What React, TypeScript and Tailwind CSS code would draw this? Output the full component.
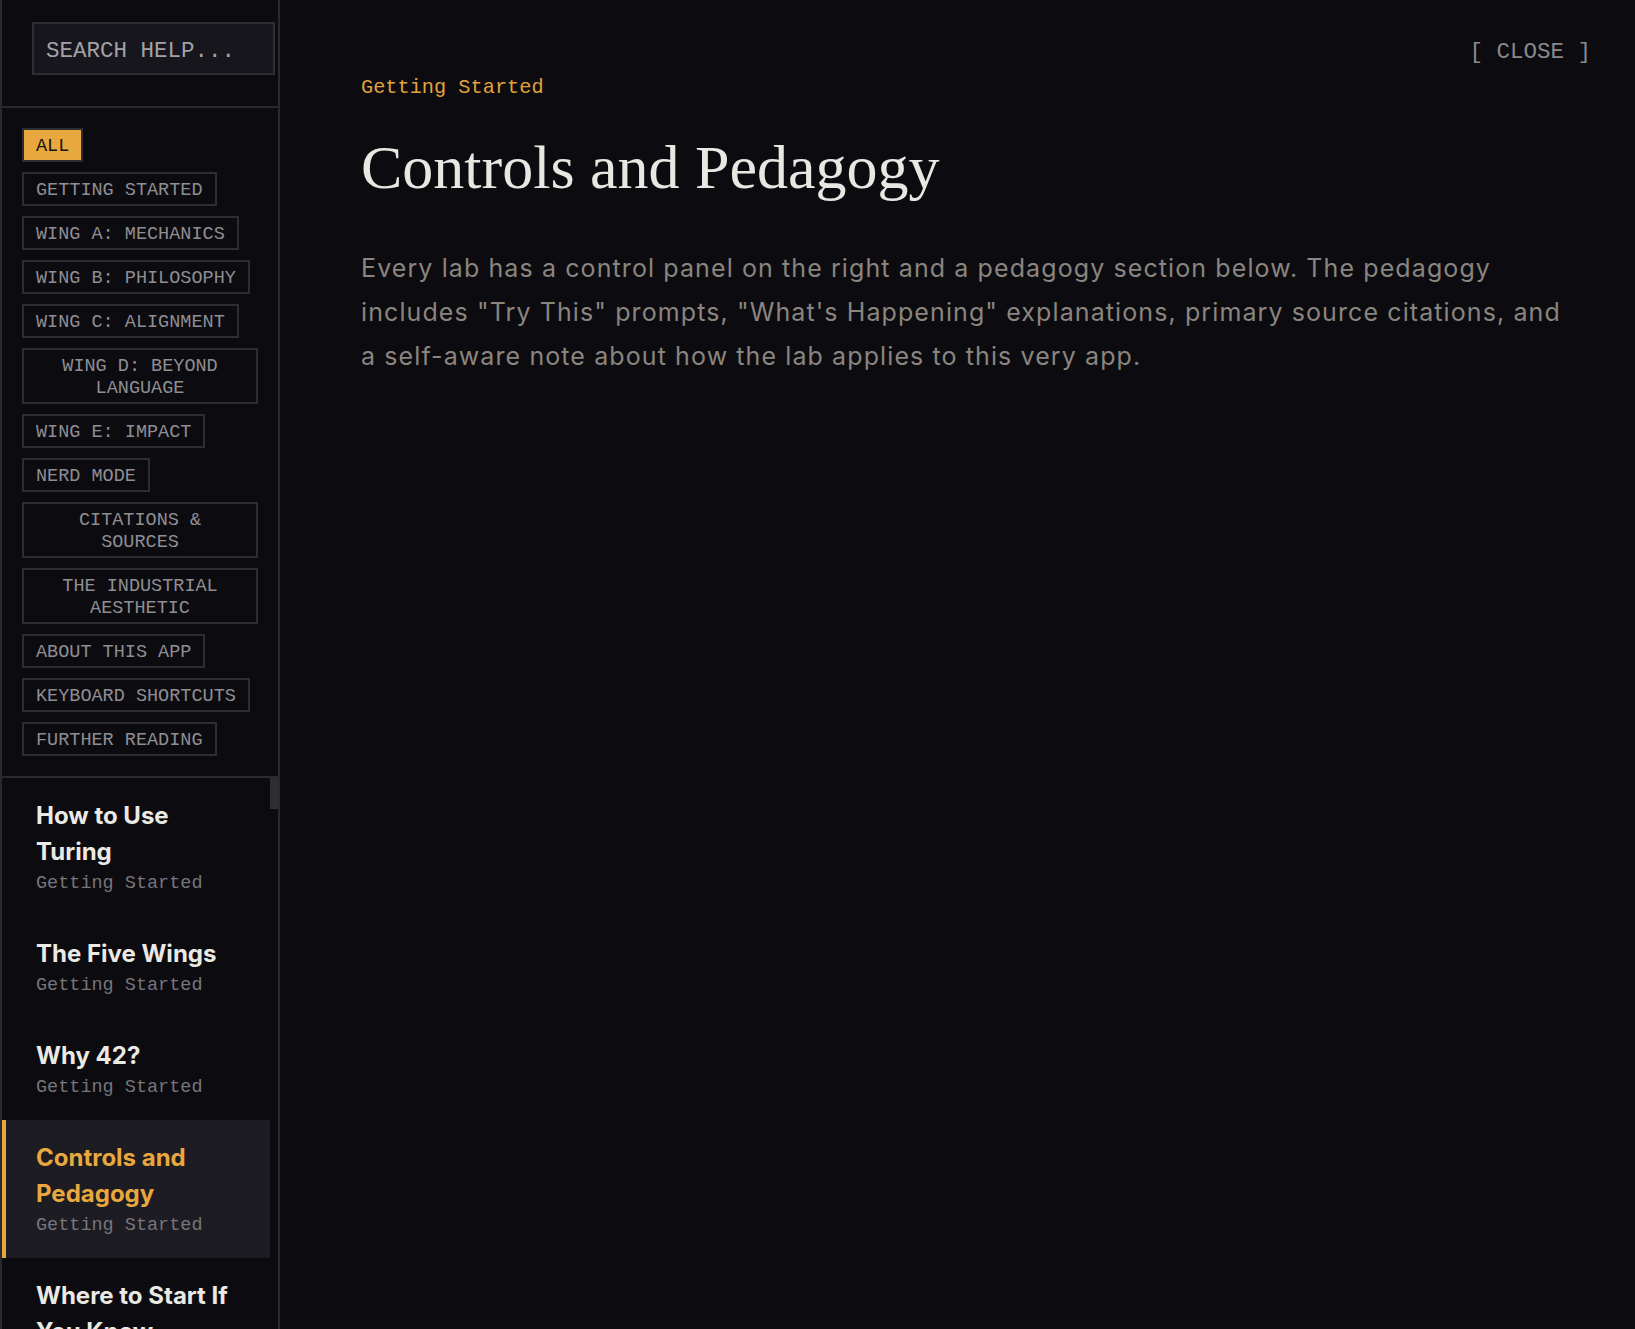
import { useState } from "react";

const mono = "font-['Liberation_Mono','DejaVu_Sans_Mono',monospace]";
const sans = "font-['Inter','Noto_Sans',sans-serif]";

const filters = [
  "ALL",
  "GETTING STARTED",
  "WING A: MECHANICS",
  "WING B: PHILOSOPHY",
  "WING C: ALIGNMENT",
  "WING D: BEYOND LANGUAGE",
  "WING E: IMPACT",
  "NERD MODE",
  "CITATIONS & SOURCES",
  "THE INDUSTRIAL AESTHETIC",
  "ABOUT THIS APP",
  "KEYBOARD SHORTCUTS",
  "FURTHER READING",
];

const articles = [
  { title: "How to Use Turing", section: "Getting Started" },
  { title: "The Five Wings", section: "Getting Started" },
  { title: "Why 42?", section: "Getting Started" },
  { title: "Controls and Pedagogy", section: "Getting Started" },
  { title: "Where to Start If You Know Nothing", section: "Getting Started" },
];

const Sidebar = ({ active, onPick }: { active: number; onPick: (i: number) => void }) => {
  const [filter, setFilter] = useState("ALL");

  return (
    <aside className="w-[280px] shrink-0 h-full flex flex-col border-l-2 border-r-2 border-[#2a2930] bg-[#0c0b10] overflow-hidden">
      <div className="pt-[22px] pb-[31px] pl-[30px] pr-[3px] border-b-2 border-[#2a2930]">
        <input
          placeholder="SEARCH HELP..."
          className={`${mono} w-full h-[53px] bg-[#17161c] border-2 border-[#2e2d33] px-[12px] pt-[5px] text-[22.5px] text-[#a3a2a7] placeholder:text-[#a3a2a7] outline-none`}
        />
      </div>

      <div className="px-[20px] py-[20px] border-b-2 border-[#2a2930] flex flex-col items-start gap-[10px]">
        {filters.map((f) => {
          const on = f === filter;
          return (
            <button
              key={f}
              onClick={() => setFilter(f)}
              className={`${mono} border-2 border-[#2e2d33] px-[12px] pt-[5.5px] pb-[2.5px] text-[18.5px] leading-[22px] text-center ${
                on ? "bg-[#e8a83e] text-[#16130e]" : "text-[#8f8e93]"
              }`}
            >
              {f}
            </button>
          );
        })}
      </div>

      <div className="flex-1 flex min-h-0">
        <div className="flex-1 flex flex-col">
          {articles.map((a, i) => {
            const on = i === active;
            return (
              <button
                key={a.title}
                onClick={() => onPick(i)}
                className={`text-left border-l-4 pl-[30px] pr-[30px] py-[19.5px] ${
                  on ? "border-[#e8a83e] bg-[#1d1c22]" : "border-transparent"
                }`}
              >
                <div
                  className={`${sans} text-[24px] leading-[36px] font-bold ${
                    on ? "text-[#e8a83e]" : "text-[#ebe9e4]"
                  }`}
                >
                  {a.title}
                </div>
                <div className={`${mono} text-[18.5px] leading-[27px] text-[#77757b]`}>{a.section}</div>
              </button>
            );
          })}
        </div>
        <div className="w-[8px] shrink-0">
          <div className="h-[31px] bg-[#2e2d33]" />
        </div>
      </div>
    </aside>
  );
};

export default function App() {
  const [active, setActive] = useState(3);
  const article = articles[active];

  return (
    <div className="h-screen w-full flex bg-[#0c0b10] overflow-hidden">
      <Sidebar active={active} onPick={setActive} />

      <main className="flex-1 min-w-0 pt-[38px] pr-[44px]">
        <div className="flex justify-end">
          <button className={`${mono} text-[22.5px] leading-[28px] text-[#8a898e]`}>[ CLOSE ]</button>
        </div>

        <div className="pl-[81px] mt-[8px] max-w-[1281px]">
          <div className={`${mono} text-[20.3px] leading-[28px] text-[#e0a23c]`}>{article.section}</div>
          <h1 className="mt-[28px] font-['Liberation_Serif','DejaVu_Serif',serif] text-[62px] leading-[1.2] font-normal text-[#e9e7e2]">
            Controls and Pedagogy
          </h1>
          <p className={`${sans} mt-[42px] text-[25px] leading-[44px] tracking-[1.1px] text-[#8a857f]`}>
            Every lab has a control panel on the right and a pedagogy section below. The pedagogy includes "Try
            This" prompts, "What's Happening" explanations, primary source citations, and a self-aware note about
            how the lab applies to this very app.
          </p>
        </div>
      </main>
    </div>
  );
}
